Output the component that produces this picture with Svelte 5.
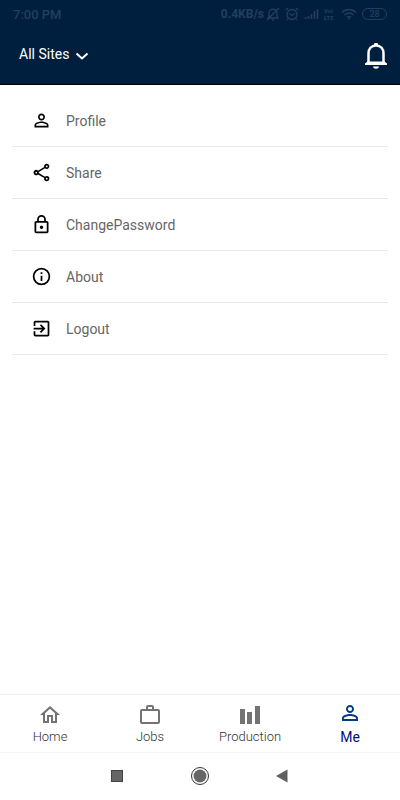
<script lang="ts">
  const person = 'M12 5.9a2.1 2.1 0 1 1 0 4.2 2.1 2.1 0 0 1 0-4.2m0 9c2.97 0 6.1 1.46 6.1 2.1v1.1H5.9V17c0-.64 3.13-2.1 6.1-2.1M12 4C9.79 4 8 5.79 8 8s1.79 4 4 4 4-1.79 4-4-1.79-4-4-4zm0 9c-2.67 0-8 1.34-8 4v3h16v-3c0-2.66-5.33-4-8-4z';

  const menu = [
    { label: 'Profile', icon: person },
    {
      label: 'Share',
      icon: 'M18 2a3 3 0 0 0-3 3c0 .25.03.49.09.72L7.96 9.88A3 3 0 1 0 8 14.16l7.09 4.15A3 3 0 1 0 18 16c-.76 0-1.45.3-1.96.77L8.91 12.7a3 3 0 0 0 0-1.4l7.05-4.11A3 3 0 1 0 18 2zm0 2a1 1 0 1 1 0 2 1 1 0 0 1 0-2zM6 11a1 1 0 1 1 0 2 1 1 0 0 1 0-2zm12 7a1 1 0 1 1 0 2 1 1 0 0 1 0-2z'
    },
    {
      label: 'ChangePassword',
      icon: 'M12 17a2 2 0 1 0 0-4 2 2 0 0 0 0 4zm6-9h-1V6A5 5 0 0 0 7 6v2H6c-1.1 0-2 .9-2 2v10c0 1.1.9 2 2 2h12c1.1 0 2-.9 2-2V10c0-1.1-.9-2-2-2zM9 6a3 3 0 0 1 6 0v2H9V6zm9 14H6V10h12v10z'
    },
    {
      label: 'About',
      icon: 'M11 7h2v2h-2V7zm0 4h2v6h-2v-6zm1-9a10 10 0 1 0 0 20 10 10 0 0 0 0-20zm0 18a8 8 0 1 1 0-16 8 8 0 0 1 0 16z'
    },
    {
      label: 'Logout',
      icon: 'M10.09 15.59L11.5 17l5-5-5-5-1.41 1.41L12.67 11H3v2h9.67l-2.58 2.59zM19 3H5a2 2 0 0 0-2 2v4h2V5h14v14H5v-4H3v4a2 2 0 0 0 2 2h14c1.1 0 2-.9 2-2V5c0-1.1-.9-2-2-2z'
    }
  ];

  const tabs = [
    { label: 'Home', icon: 'M12 5.69l5 4.5V18h-2v-6H9v6H7v-7.81l5-4.5M12 3L2 12h3v8h6v-6h2v6h6v-8h3L12 3z' },
    {
      label: 'Jobs',
      icon: 'M10 2h4a2 2 0 0 1 2 2v2h4a2 2 0 0 1 2 2v11a2 2 0 0 1-2 2H4a2 2 0 0 1-2-2V8a2 2 0 0 1 2-2h4V4a2 2 0 0 1 2-2zm4 4V4h-4v2h4zM4 8v11h16V8H4z'
    },
    { label: 'Production', icon: 'M2 6h5v15H2zM9 9h5v12H9zM17 3h5v18h-5z' },
    { label: 'Me', icon: person }
  ];

  let active = $state('Me');
</script>

<div class="screen">
  <header>
    <div class="status">
      <span>7:00 PM</span>
      <div class="indicators">
        <span class="speed">0.4KB/s</span>
        <svg width="14" height="14" viewBox="0 0 14 14">
          <path d="M2 11h10l-1-2V6c0-5-8-5-8 0v3zM6 13h2M1 13L13 1" stroke-width="1.3" />
        </svg>
        <svg width="14" height="14" viewBox="0 0 14 14">
          <circle cx="7" cy="7.5" r="5" stroke-width="1.3" />
          <path d="M4.5 6.5L7 8.5l2.5-2M1 3l2-2M13 3l-2-2M3 12l-1 1M11 12l1 1" stroke-width="1.3" />
        </svg>
        <svg width="15" height="12" viewBox="0 0 15 12">
          <path d="M1.5 11v-2M4.5 11V8M7.5 11V6M10.5 11V3M13.5 11V1" stroke-width="1.6" />
        </svg>
        <span class="volte"><span>Vo≀</span><span>LTE</span></span>
        <svg width="16" height="12" viewBox="0 0 16 12">
          <path d="M1 4.5c4-4 10-4 14 0M3.5 7c3-2.6 6-2.6 9 0M6 9.2c1.3-1 2.7-1 4 0" stroke-width="1.5" />
          <circle class="dot" cx="8" cy="10.5" r="1" />
        </svg>
        <span class="battery">28</span>
      </div>
    </div>
    <div class="bar">
      <button class="sites">
        All Sites
        <svg width="14" height="10" viewBox="0 0 14 10">
          <path d="M1.5 2.5L7 7.5l5.5-5" />
        </svg>
      </button>
      <button aria-label="Notifications">
        <svg width="24" height="28" viewBox="0 0 24 28">
          <path d="M4.5 21V11.5c0-5 3-8 7.5-8s7.5 3 7.5 8V21" fill="none" stroke="#fff" stroke-width="2.5" />
          <path d="M9.5 4l1-3h3l1 3zM1 23v-1.5l2.5-2h17l2.500 2V23zM9 24.500h6c-.3 3-5.700 3-6 0z" fill="#fff" />
        </svg>
      </button>
    </div>
  </header>

  <main>
    <ul>
      {#each menu as item}
        <li>
          <button>
            <svg width="21" height="21" viewBox="0 0 24 24"><path d={item.icon} /></svg>
            {item.label}
          </button>
        </li>
      {/each}
    </ul>
  </main>

  <nav class="tabs">
    {#each tabs as tab}
      <button class:active={active === tab.label} onclick={() => (active = tab.label)}>
        <svg width="24" height="24" viewBox="0 0 24 24"><path d={tab.icon} /></svg>
        {tab.label}
      </button>
    {/each}
  </nav>

  <div class="system">
    <button aria-label="Recent apps">
      <svg width="20" height="20" viewBox="0 0 20 20">
        <rect x="4.5" y="4.5" width="11" height="11" fill="#666" stroke="#444" />
      </svg>
    </button>
    <button aria-label="Home screen">
      <svg width="20" height="20" viewBox="0 0 20 20">
        <circle cx="10" cy="10" r="8.5" fill="none" stroke="#333" />
        <circle cx="10" cy="10" r="6.5" fill="#666" />
      </svg>
    </button>
    <button aria-label="Back">
      <svg width="20" height="20" viewBox="0 0 20 20">
        <path d="M14.5 3.5v13L3 10z" fill="#606060" />
      </svg>
    </button>
  </div>
</div>

<style>
  :global(body) {
    background: #fff;
  }

  .screen {
    display: flex;
    flex-direction: column;
    min-height: 100vh;
    font-family: Roboto, 'Liberation Sans', sans-serif;
  }

  button {
    padding: 0;
    border: none;
    background: none;
    font: inherit;
    color: inherit;
    cursor: pointer;
  }

  svg {
    display: block;
    flex: none;
  }

  header {
    background: #001f3f;
    border-bottom: 1px solid #000;
  }

  .status {
    display: flex;
    align-items: center;
    justify-content: space-between;
    height: 28px;
    padding: 0 13px;
    font-size: 13px;
    font-weight: 500;
    color: #223f5e;
  }

  .indicators {
    display: flex;
    align-items: center;
    gap: 5px;
  }

  .indicators svg {
    fill: none;
    stroke: currentColor;
  }

  .indicators .dot {
    fill: currentColor;
    stroke: none;
  }

  .speed {
    font-size: 12px;
    font-weight: 700;
    margin-right: -3px;
  }

  .volte {
    display: flex;
    flex-direction: column;
    width: 12px;
    font-size: 6px;
    font-weight: 700;
    line-height: 7px;
  }

  .battery {
    width: 23px;
    border: 1px solid currentColor;
    border-radius: 6px;
    font-size: 9px;
    line-height: 10px;
    text-align: center;
  }

  .bar {
    display: flex;
    align-items: center;
    justify-content: space-between;
    height: 56px;
    padding: 0 12px 0 19px;
    color: #fff;
  }

  .sites {
    display: flex;
    align-items: center;
    gap: 6px;
    padding-bottom: 4px;
    font-size: 14px;
    line-height: 20px;
  }

  .sites svg {
    margin-top: 4px;
    fill: none;
    stroke: #fff;
    stroke-width: 2;
  }

  main {
    flex: 1;
    padding: 10px 12px;
  }

  ul {
    margin: 0;
    padding: 0;
    list-style: none;
  }

  li {
    border-bottom: 1px solid #e6e8ea;
  }

  li button {
    display: flex;
    align-items: center;
    gap: 14px;
    width: 100%;
    height: 51px;
    padding-left: 19px;
    font-size: 14px;
    color: #666;
  }

  li svg {
    fill: #000;
  }

  .tabs {
    display: grid;
    grid-template-columns: repeat(4, 1fr);
    height: 57px;
    border-top: 1px solid #f2f2f2;
  }

  .tabs button {
    display: flex;
    flex-direction: column;
    align-items: center;
    gap: 2px;
    padding-top: 8px;
    font-size: 13px;
    line-height: 16px;
    font-weight: 300;
    color: #333;
  }

  .tabs svg {
    fill: #737373;
  }

  .tabs .active {
    padding-top: 6px;
    font-size: 14px;
    line-height: 20px;
    font-weight: 400;
    color: #000f75;
  }

  .tabs .active svg {
    fill: #003b8a;
  }

  .system {
    display: flex;
    align-items: center;
    justify-content: center;
    gap: 63px;
    height: 46px;
    padding-bottom: 1px;
    border-top: 1px solid #f5f5f5;
  }
</style>
